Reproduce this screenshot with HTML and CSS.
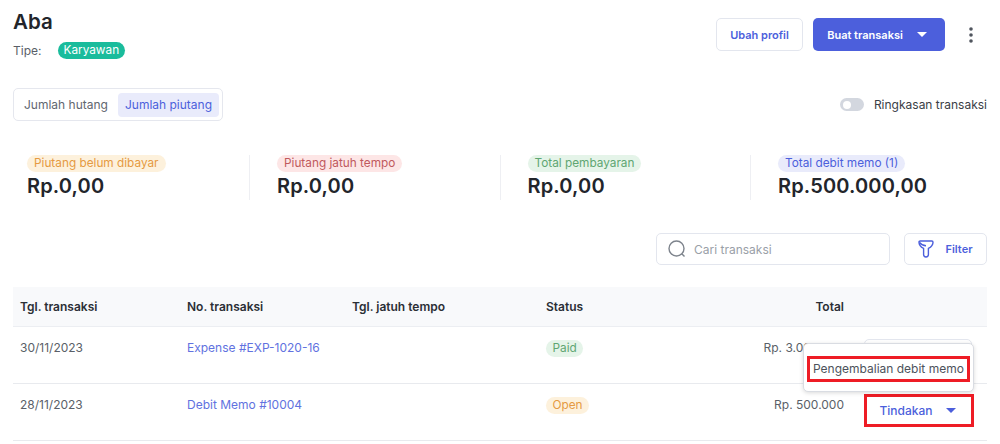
FILE: index.html
```html
<!DOCTYPE html>
<html lang="id">
<head>
<meta charset="utf-8">
<title>Aba</title>
<link rel="stylesheet" href="styles.css">
</head>
<body>
<main class="page">
  <header class="head">
    <div class="who">
      <h1 class="name">Aba</h1>
      <div class="type"><span class="type-label">Tipe:</span><span class="type-tag">Karyawan</span></div>
    </div>
    <div class="actions">
      <button class="btn btn-outline btn-profile">Ubah profil</button>
      <button class="btn btn-primary">Buat transaksi<span class="caret caret-white"></span></button>
      <svg class="kebab" width="6" height="18" viewBox="0 0 6 18"><circle cx="3" cy="3" r="1.8"/><circle cx="3" cy="9" r="1.8"/><circle cx="3" cy="15" r="1.8"/></svg>
    </div>
  </header>

  <section class="tabs-row">
    <div class="tabs"><span class="tab">Jumlah hutang</span><span class="tab tab-on">Jumlah piutang</span></div>
    <div class="summary-toggle"><span class="switch"><span class="knob"></span></span><span>Ringkasan transaksi</span></div>
  </section>

  <section class="stats">
    <div class="stat"><span class="pill pill-orange">Piutang belum dibayar</span><div class="amount">Rp.0,00</div></div>
    <div class="stat"><span class="pill pill-red">Piutang jatuh tempo</span><div class="amount">Rp.0,00</div></div>
    <div class="stat"><span class="pill pill-green">Total pembayaran</span><div class="amount">Rp.0,00</div></div>
    <div class="stat"><span class="pill pill-blue">Total debit memo (1)</span><div class="amount">Rp.500.000,00</div></div>
  </section>

  <section class="tools">
    <div class="search">
      <svg width="20" height="20" viewBox="0 0 20 20" fill="none" stroke="#7d838c" stroke-width="1.4"><circle cx="9.500" cy="9.500" r="7.500"/><path d="M15 15l2.500 2.500"/></svg>
      <span>Cari transaksi</span>
    </div>
    <button class="btn btn-outline btn-filter">
      <svg width="16" height="18" viewBox="0 0 16 18" fill="none" stroke="#4c5fdc" stroke-width="1.4" stroke-linejoin="round"><path d="M1 2.200c0-.7.500-1.200 1.200-1.200h11.600c.7 0 1.200.500 1.200 1.200 0 2.300-2 4.800-4.600 6.200v6.200c0 1.300-1 2.400-2.400 2.400S5.600 15.900 5.600 14.600V8.400C3 7 1 4.500 1 2.200z"/><path d="M1.500 2.500c2 2.500 4 3.200 6.500 3.200"/></svg>
      Filter
    </button>
  </section>

  <section class="table">
    <div class="row row-head">
      <div>Tgl. transaksi</div><div>No. transaksi</div><div>Tgl. jatuh tempo</div><div>Status</div><div class="total">Total</div><div></div>
    </div>
    <div class="row">
      <div>30/11/2023</div><div class="link">Expense #EXP-1020-16</div><div></div><div><span class="pill pill-green status">Paid</span></div><div class="total">Rp. 3.000.000</div><div><span class="ghost"></span></div>
    </div>
    <div class="row">
      <div>28/11/2023</div><div class="link">Debit Memo #10004</div><div></div><div><span class="pill pill-orange status">Open</span></div><div class="total">Rp. 500.000</div>
      <div><button class="action">Tindakan<span class="caret caret-blue"></span></button></div>
    </div>
    <div class="menu"><div class="menu-item">Pengembalian debit memo</div></div>
  </section>
</main>
</body>
</html>
```
FILE: styles.css
```css
* { box-sizing: border-box; }
html, body { margin: 0; height: 444px; overflow: hidden; background: #fff; }
body { font-family: Inter, "Liberation Sans", sans-serif; color: #2b2f36; font-size: 12px; }
.page { padding: 8px 13px 0 13px; }

.head { display: flex; justify-content: space-between; align-items: flex-start; height: 80px; }
.name { margin: 0; font-size: 20.500px; line-height: 27px; font-weight: 600; color: #22252b; }
.type { display: flex; align-items: center; margin-top: 6px; height: 18px; }
.type-label { width: 45px; color: #5a5f68; font-size: 12px; }
.type-tag { background: #1abc9c; color: #fff; border-radius: 9px; height: 17px; line-height: 17px; padding: 0 5.500px; font-size: 11.800px; }
.actions { display: flex; align-items: center; margin-top: 10px; margin-right: 13px; }
.btn { font-family: inherit; font-size: 11px; font-weight: 600; border-radius: 5px; height: 33px; display: flex; align-items: center; justify-content: center; padding: 0; }
.btn-outline { background: #fff; border: 1px solid #e3e6ee; color: #4c5fdc; }
.btn-profile { width: 87px; }
.btn-primary { width: 132px; margin-left: 10px; background: #4c5fdc; border: 0; color: #fff; }
.kebab { margin-left: 23px; fill: #50555e; }
.caret { display: inline-block; width: 0; height: 0; border-left: 5px solid transparent; border-right: 5px solid transparent; border-top: 5px solid; }
.caret-white { border-top-color: #fff; margin-left: 14px; margin-right: 4px; }
.caret-blue { border-top-color: #4c5fdc; margin-left: 13px; margin-right: 3px; }

.tabs-row { display: flex; justify-content: space-between; align-items: center; height: 33px; }
.tabs { display: flex; align-items: center; width: 210px; height: 33px; border: 1px solid #e5e7ee; border-radius: 5px; padding: 0 3px 0 10px; white-space: nowrap; }
.tab { color: #61666f; line-height: 24px; margin-right: 10px; }
.tab-on { margin-right: 0; background: #e9ebfb; color: #4c5fdc; border-radius: 4px; padding: 0 7px; }
.summary-toggle { display: flex; align-items: center; gap: 10px; color: #3a3e46; }
.switch { width: 24px; height: 13px; border-radius: 7px; background: #d3d7df; display: flex; align-items: center; padding-left: 3px; }
.knob { width: 8px; height: 8px; border-radius: 50%; background: #fff; }

.stats { display: grid; grid-template-columns: 236px repeat(3, 250.500px); margin-top: 34px; height: 44px; }
.stat { padding-left: 27px; border-left: 1px solid #eeeff3; }
.stat:first-child { padding-left: 14px; border-left: 0; }
.pill { display: inline-block; height: 17px; line-height: 17px; border-radius: 9px; padding: 0 7px; font-size: 11.800px; }
.pill-orange { background: #fdf1dc; color: #e59a42; }
.pill-red { background: #fde6e6; color: #c0595d; }
.pill-green { background: #e5f4e9; color: #5fa672; }
.pill-blue { background: #e9ebfb; color: #4c5fdc; }
.amount { font-size: 20px; line-height: 27px; font-weight: 600; color: #22252b; margin-top: 1px; letter-spacing: .15px; }

.tools { display: flex; justify-content: flex-end; gap: 14px; margin-top: 34px; }
.search { width: 234px; height: 32px; border: 1px solid #e3e6ee; border-radius: 5px; display: flex; align-items: center; gap: 7px; padding-left: 10px; color: #9a9fa8; }
.btn-filter { width: 83px; height: 32px; gap: 11px; }

.table { position: relative; margin-top: 22px; }
.row { display: grid; grid-template-columns: 167px 165px 194px 187px 111px 1fr; height: 57px; border-bottom: 1px solid #e8eaee; padding-left: 7px; padding-top: 12px; line-height: 17px; color: #5a5f68; }
.row-head { height: 40px; padding-top: 11px; background: #f8f9fb; border-bottom: 1px solid #eceef2; font-weight: 600; color: #2b2f36; }
.total { text-align: right; }
.link { color: #6172e0; }
.status { padding: 0 6.500px; }
.ghost { display: block; width: 108px; height: 30px; margin-left: 20px; border: 1px solid #e3e6ee; border-radius: 5px; }
.action { display: flex; align-items: center; justify-content: center; width: 110px; height: 33px; margin: -2px 0 0 20px; background: #fff; border: 3px solid #ee1c25; font: 500 12px Inter, "Liberation Sans", sans-serif; color: #4c5fdc; padding: 0; }
.menu { position: absolute; left: 790px; top: 56px; width: 171px; height: 49px; background: #fff; border: 1px solid #d9dce2; border-radius: 5px; box-shadow: 0 1px 4px rgba(0, 0, 0, .15); padding: 12px 3px 0 3px; }
.menu-item { height: 26px; border: 3px solid #ee1c25; line-height: 20px; color: #4d525b; padding-left: 3px; white-space: nowrap; }
```
